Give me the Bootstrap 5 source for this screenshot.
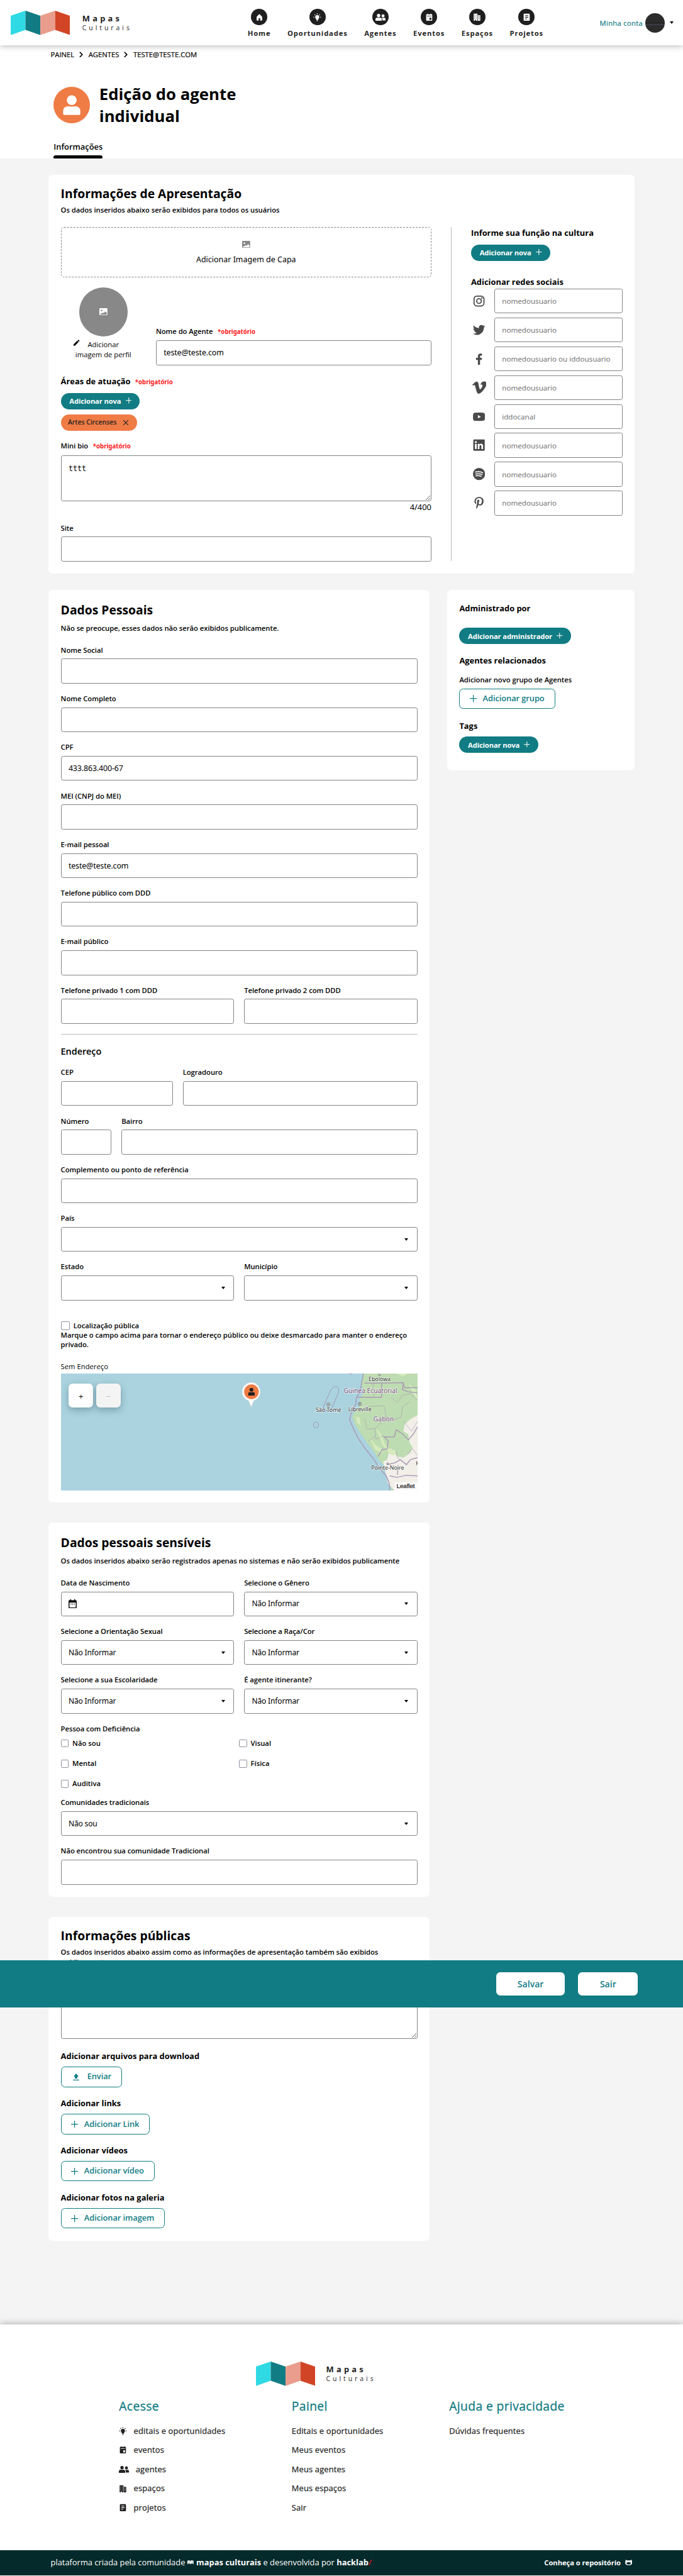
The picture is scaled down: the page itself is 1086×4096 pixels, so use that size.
<!DOCTYPE html>
<html lang="pt-BR">
<head>
<meta charset="utf-8">
<meta name="viewport" content="width=device-width, initial-scale=1">
<title>Edição do agente individual - Mapas Culturais</title>
<link rel="stylesheet" href="https://cdn.jsdelivr.net/npm/bootstrap@5.3.0/dist/css/bootstrap.min.css">
<style>
:root{--teal:#117c83;--orange:#ef7b45;--ink:#1f1f1f}
html{background:#f4f4f4;font-size:8.053px}
body{font-family:"Open Sans",sans-serif;font-size:1.4rem;line-height:1.9rem;color:#000;background:#f4f4f4;position:relative}
svg{display:block;flex:none}
a{color:inherit;text-decoration:none}
.i12{width:1.2rem;height:1.2rem}
.i14{width:1.4rem;height:1.4rem}
.i16{width:1.6rem;height:1.6rem}
.ipeople{width:2rem;height:1.4rem}
.ipic{width:1.6rem;height:1.4rem}
.ilogo{width:11.7rem;height:4.8rem}
.ichev{width:.8rem;height:1.2rem}
.topbar{height:9rem;background:#fff;box-shadow:0 .2rem 1.2rem rgba(0,0,0,.27);position:relative;padding:0 1.9rem 0 2.05rem;display:grid;grid-template-columns:46.85rem 1fr auto}
.brand-name{font-weight:700;font-size:1.6rem;line-height:2rem;letter-spacing:.52rem;color:var(--ink)}
.brand-sub{font-size:1.3rem;line-height:1.8rem;letter-spacing:.49rem;color:var(--ink)}
.brand-txt{margin-left:2.5rem}
.topnav{gap:3.3rem;padding-top:1.8rem}
.topnav a{font-weight:700;letter-spacing:.105rem;color:var(--ink);line-height:1.9rem}
.ring{width:3.2rem;height:3.2rem;border-radius:50%;background:var(--ink);color:#fff;margin-bottom:.6rem;display:flex;align-items:center;justify-content:center}
.account{color:var(--teal);letter-spacing:.035rem;-webkit-text-stroke:.2px}
.avatar{width:3.8rem;height:3.8rem;margin-left:.5rem;border-radius:50%;background:linear-gradient(#2c2c2c 0 22%,#3a2e30 22% 24%,#2b2b2b 24% 50%,#1f1f1f 50% 53%,#2d3036 53% 57%,#42454a 57% 60%,#2c2c2c 60%)}
.caret-mini{border:.4rem solid transparent;border-top:.5rem solid #000;border-bottom:0;margin-left:1rem}
.headblock{background:#fff;height:22.3rem;padding:.8rem 0 0 10rem}
.crumbs{font-weight:500;gap:1rem;-webkit-text-stroke:.2px}
.title-row{margin:5.5rem 0 0 .6rem;gap:1.8rem}
.title-row h1{font-size:3.2rem;line-height:4.4rem;font-weight:700;margin:-.8rem 0 0;width:32rem}
.who{width:7.2rem;height:7.2rem;border-radius:50%;background:var(--orange)}
.who svg{width:3.5rem;height:4.1rem}
.tab-on{width:fit-content;margin:2.7rem 0 0 .6rem;font-size:1.6rem;line-height:2.2rem;font-weight:600}
.tab-on::after{content:"";display:block;height:.6rem;background:#000;border-radius:.4rem .4rem .2rem .2rem;margin-top:.6rem}
.wrap{width:115.7rem;margin:3.2rem 0 0 9.6rem}
.main-col{width:75.2rem}
.panel{background:#fff;border-radius:.8rem;padding:2.4rem}
.panel+.panel{margin-top:4rem}
.side-panel{width:37rem;height:35.6rem}
.panel h2{font-size:2.4rem;line-height:3.3rem;font-weight:700;margin:0 0 .9rem}
.panel.tight{padding-top:2.1rem}
.panel.tight h2{margin-bottom:.6rem}
.panel h4{font-size:1.6rem;line-height:2.2rem;font-weight:700;margin:0}
.hint{font-weight:600;font-size:1.4rem;margin:0;letter-spacing:-.004rem}
.form-label{font-weight:600;margin:0 0 .8rem;line-height:1.9rem;display:block;font-size:1.4rem;letter-spacing:-.005rem}
.req{font-size:1.2rem;line-height:1.2rem;font-weight:700;color:#f22;margin-left:.6rem;font-family:"Noto Sans",sans-serif;letter-spacing:0}
.form-control,.form-select{height:4.9rem;border:1px solid #848484;border-radius:.4rem;font:1.55rem/2.2rem "Noto Sans",sans-serif;letter-spacing:-.02rem;color:#000;padding:0 1.4rem;background-color:#fff}
.form-control::placeholder{color:#777;font-size:1.45rem;letter-spacing:-.005rem}
.form-select{background-image:url("data:image/svg+xml,%3Csvg xmlns='http://www.w3.org/2000/svg' viewBox='0 0 8 5'%3E%3Cpath d='M0 0h8L4 5z'/%3E%3C/svg%3E");background-size:.8rem .5rem;background-position:right 1.6rem center;font-size:1.5rem}
textarea.bio{height:9.1rem;padding-top:1.5rem;font-family:"DejaVu Sans Mono",monospace;font-size:1.45rem;line-height:2rem;letter-spacing:0}
.counter{font:1.6rem/2.2rem "Noto Sans",sans-serif;margin:.1rem 0 2rem}
.fields{display:flex;flex-direction:column;gap:2rem}
.hint+.fields{margin-top:2.4rem}
.pair{display:grid;grid-template-columns:1fr 1fr;gap:2rem}
.cep{grid-template-columns:22.1rem 1fr}
.num{grid-template-columns:10rem 1fr}
.cover{height:10rem;border:1px dashed #888;border-radius:.6rem;font-size:1.55rem;line-height:2.2rem;padding-top:2.6rem;font-family:"Noto Sans",sans-serif}
.cover svg{color:#888;margin-bottom:1.2rem}
.profile-row{height:15.3rem;margin:2rem 0 2.2rem}
.photo-col{width:16.8rem;margin-right:2rem}
.photo{width:9.6rem;height:9.6rem;border-radius:50%;background:#888;color:#fff;margin-bottom:.7rem}
.pencil{left:-.3rem;top:0}
.pill{display:flex;width:fit-content;align-items:center;height:3.2rem;border-radius:1.6rem;background:var(--teal);color:#fff;font-weight:700;font-size:1.4rem;letter-spacing:-.02rem;padding:0 1.6rem 0 1.7rem;gap:.9rem}
.pill svg{margin-top:-.2rem}
.tag-or{background:var(--orange);color:var(--ink);height:3.3rem;font-size:1.3rem;font-weight:600;gap:1.3rem;padding:0 1.7rem 0 1.4rem;letter-spacing:0}
.tag-or svg{margin:0;width:1rem;height:1rem}
.tags-col{gap:1rem;margin:1.1rem 0 2rem}
.btn-line{display:flex;align-items:center;height:4rem;border:.2rem solid var(--teal);border-radius:.8rem;color:var(--teal);font:600 1.6rem/2.2rem "Open Sans",sans-serif;letter-spacing:-.01rem;background:#fff;padding:0 2rem 0 1.9rem;gap:1.2rem}
.upl{margin:.9rem 0 2.2rem}
.divider-v{width:1px;height:66rem;background:#bbb;margin:0 3.9rem 0 3.8rem}
.rule-h{height:1px;background:#bbb;margin:2rem 0 2.1rem}
.sub-h{font-size:1.8rem;line-height:2.4rem;font-weight:600;margin-bottom:2rem;letter-spacing:-.01rem}
.social{display:flex;align-items:center;color:#4a4a4a;margin-bottom:.8rem}
.social svg{width:2.4rem;height:2.4rem;margin:0 1.8rem 0 .4rem}
.social svg.vim{width:2.8rem;height:2.8rem;margin:0 1.6rem 0 .2rem}
.social .form-control{width:25.3rem}
.box{width:1.8rem;height:1.8rem;border:.2rem solid #8f8f9d;border-radius:.2rem;background:#fff;flex:none;display:inline-block;margin:.1rem .7rem 0 0}
.box.sm16{width:1.6rem;height:1.6rem;margin-top:.2rem}
.checks{display:grid;grid-template-columns:35.2rem 1fr;row-gap:2.1rem;font-weight:600;margin:1rem 0 1.8rem}
.map{height:23rem;position:relative;background:#aad3df;overflow:hidden}
.map>svg{width:100%;height:100%}
.zbtn{position:absolute;top:1.9rem;left:1.6rem;width:4.8rem;height:4.8rem;border-radius:.8rem;background:#fff;box-shadow:0 .5rem 1.4rem rgba(30,60,80,.35);text-align:center;line-height:5rem;font-size:1.6rem}
.zbtn.off{left:7rem;background:#f4f4f4;color:#bbb}
.leaf{position:absolute;right:0;bottom:0;background:rgba(255,255,255,.75);font:1.2rem/1.6rem "Liberation Sans",sans-serif;padding:0 .5rem;color:#222;-webkit-text-stroke:.25px}
.actionbar{position:absolute;left:0;right:0;top:387rem;height:9.4rem;background:var(--teal);padding:0 8.9rem;display:flex;justify-content:flex-end;align-items:center;gap:2.6rem;z-index:5}
.actionbar button{height:4.6rem;width:13.6rem;border:0;border-radius:.8rem;background:#fff;color:var(--teal);font:600 1.75rem/2.4rem "Open Sans",sans-serif}
.actionbar button:last-child{width:11.8rem}
.foot{margin-top:16.6rem;background:#fff;height:44.5rem;box-shadow:0 -.2rem 1.2rem rgba(0,0,0,.27);padding-top:7.3rem;color:var(--ink)}
.foot-logo{margin-left:50.5rem}
.foot-logo .brand-txt{margin-left:2.2rem}
.foot-cols{padding:2.4rem 0 0 23.5rem;display:grid;grid-template-columns:34.1rem 31.1rem 1fr}
.foot h5{font-size:2.4rem;line-height:3.3rem;font-weight:500;color:var(--teal);margin:0 0 2.1rem;letter-spacing:.045rem;-webkit-text-stroke:.3px}
.foot a{display:flex;align-items:center;height:2.2rem;margin-bottom:1.6rem;font-size:1.6rem;font-weight:500;letter-spacing:.02rem;-webkit-text-stroke:.25px}
.foot a svg{margin-right:1.3rem}
.base{background:#052a2b;height:5rem;color:#fff;padding:0 10rem;display:flex;justify-content:space-between;align-items:center;font-size:1.6rem}
.base .mk{width:1.2rem;height:.8rem;margin:0 .5rem}
.repo{font-size:1.4rem;font-weight:700;letter-spacing:-.01rem}
.repo svg{width:1.4rem;height:1.1rem;margin-left:.9rem}
</style>
</head>
<body>
<svg width="0" height="0" class="position-absolute">
<symbol id="logo" viewBox="0 0 117 48"><path fill="#2fdae4" d="M0 10 29.2 0v38L0 48z"/><path fill="#117c83" d="m29.2 0 29.3 10v38L29.2 38z"/><path fill="#ea9d8d" d="M58.5 10 87.8 0v38L58.5 48z"/><path fill="#d14526" d="M87.8 0 117 10v38L87.8 38z"/></symbol>
<symbol id="home" viewBox="0 0 16 16"><path fill="currentColor" d="M8 1.5 13.5 7v6.5a1 1 0 0 1-1 1H9.6v-4.6H6.5v4.6h-3a1 1 0 0 1-1-1V7z"/></symbol>
<symbol id="bulb" viewBox="0 0 16 16"><path fill="currentColor" d="M8 3.800a4 4 0 0 1 4 4c0 2-1.600 2.900-1.900 4.800H5.900C5.600 10.700 4 9.800 4 7.800a4 4 0 0 1 4-4zM6.300 13.200h3.400l-.5 1.200H6.800zM7.300.4h1.400v2H7.300zM.4 7h2.200v1.400H.4zM13.400 7h2.200v1.400h-2.200zM2.300 3l1-1 1.300 1.300-1 1zM11.400 3.300 12.700 2l1 1-1.300 1.300zM7 14.900h2v.8H7z"/></symbol>
<symbol id="people" viewBox="0 0 20 14"><g fill="currentColor"><circle cx="6.200" cy="3.400" r="3.300"/><circle cx="15" cy="3.900" r="2.900"/><path d="M0 12.500V11c0-2.300 1.500-3.500 3.500-3.500 1 0 1.700.4 2.700.4s1.700-.4 2.700-.4c2 0 3.500 1.200 3.500 3.500v1.500c0 .9-.5 1.500-1.400 1.500H1.400C.5 14 0 13.400 0 12.500zM12.500 8c.8-.4 1.600 0 2.500 0s1.500-.3 2.300-.3c1.600 0 2.700 1.200 2.700 3v1.100c0 .8-.5 1.300-1.200 1.300h-5.300c.3-2 .2-3.700-1-5.100z"/></g></symbol>
<symbol id="event" viewBox="0 0 16 16"><path fill="currentColor" fill-rule="evenodd" d="M4 1h1.500v1.200h5V1H12v1.200h.6c.8 0 1.400.6 1.400 1.400v10c0 .8-.6 1.400-1.400 1.400H3.400c-.8 0-1.400-.6-1.400-1.400v-10c0-.8.6-1.400 1.400-1.400H4zM3.500 5v1h9V5zM8.500 9v4h3.800V9z"/></symbol>
<symbol id="build" viewBox="0 0 16 16"><path fill="currentColor" fill-rule="evenodd" d="M1.500 1h7.500v14H6.300v-2H4.200v2H1.500zM9.800 4H14.500v11H9.800zM3 3v1h1.200V3zM6 3v1h1.200V3zM3 5.500v1h1.200v-1zM6 5.500v1h1.200v-1zM3 8v1h1.200V8zM6 8v1h1.200V8zM3 10.500v1h1.200v-1zM6 10.500v1h1.200v-1zM11.500 6v1h1.300V6zM11.500 8.500v1h1.300v-1zM11.500 11v1h1.300v-1z"/></symbol>
<symbol id="doc" viewBox="0 0 16 16"><path fill="currentColor" fill-rule="evenodd" d="M3.400 1h9.200c.8 0 1.400.6 1.400 1.400v11.200c0 .8-.6 1.400-1.400 1.400H3.400c-.8 0-1.400-.6-1.400-1.400V2.400C2 1.600 2.600 1 3.400 1zM4.800 4v1.300h6.400V4zM4.800 7.300v1.300h6.400V7.300zM4.800 10.600v1.300h4v-1.300z"/></symbol>
<symbol id="user" viewBox="0 0 36 42"><g fill="currentColor"><circle cx="18" cy="10.500" r="10"/><path d="M.5 38v-5.500c0-6 4.500-9.700 10-9.700 2.500 0 4.500.9 7.500.9s5-.9 7.500-.9c5.500 0 10 3.700 10 9.700V38c0 1.600-1 2.500-2.500 2.500H3C1.500 40.500.5 39.600.5 38z"/></g></symbol>
<symbol id="pic" viewBox="0 0 16 14"><path fill="currentColor" fill-rule="evenodd" d="M1.500 0h13A1.500 1.500 0 0 1 16 1.500v11a1.500 1.500 0 0 1-1.500 1.500h-13A1.500 1.500 0 0 1 0 12.500v-11A1.500 1.500 0 0 1 1.500 0zM4.500 3a1.600 1.600 0 1 0 0 3.200 1.600 1.600 0 0 0 0-3.200zM1.800 12.600h12.700V9l-3-2.600-2.700 3.400-1.600-1-3.400 1.800-2 .6z"/></symbol>
<symbol id="plus" viewBox="0 0 12 12"><path stroke="currentColor" stroke-width="1.300" d="M6 0v12M0 6h12"/></symbol>
<symbol id="chev" viewBox="0 0 8 12"><path fill="none" stroke="#000" stroke-width="2" d="m1 1 5 5-5 5"/></symbol>
</svg>

<header class="topbar">
  <div class="d-flex align-items-center"><svg class="ilogo"><use href="#logo"/></svg><div class="brand-txt"><div class="brand-name">Mapas</div><div class="brand-sub">Culturais</div></div></div>
  <nav class="topnav d-flex align-items-start">
    <a class="d-flex flex-column align-items-center" href="#"><span class="ring"><svg class="i16"><use href="#home"/></svg></span>Home</a>
    <a class="d-flex flex-column align-items-center" href="#"><span class="ring"><svg class="i16"><use href="#bulb"/></svg></span>Oportunidades</a>
    <a class="d-flex flex-column align-items-center" href="#"><span class="ring"><svg class="ipeople"><use href="#people"/></svg></span>Agentes</a>
    <a class="d-flex flex-column align-items-center" href="#"><span class="ring"><svg class="i16"><use href="#event"/></svg></span>Eventos</a>
    <a class="d-flex flex-column align-items-center" href="#"><span class="ring"><svg class="i16"><use href="#build"/></svg></span>Espaços</a>
    <a class="d-flex flex-column align-items-center" href="#"><span class="ring"><svg class="i16"><use href="#doc"/></svg></span>Projetos</a>
  </nav>
  <div class="d-flex align-items-center"><span class="account">Minha conta</span><span class="avatar"></span><span class="caret-mini"></span></div>
</header>

<section class="headblock">
  <div class="crumbs d-flex align-items-center"><span>PAINEL</span><svg class="ichev"><use href="#chev"/></svg><span>AGENTES</span><svg class="ichev"><use href="#chev"/></svg><span>TESTE@TESTE.COM</span></div>
  <div class="title-row d-flex align-items-start"><div class="who d-flex align-items-center justify-content-center text-white"><svg><use href="#user"/></svg></div><h1>Edição do agente individual</h1></div>
  <div class="tab-on">Informações</div>
</section>

<main class="wrap">
  <section class="panel tight">
    <h2>Informações de Apresentação</h2>
    <p class="hint">Os dados inseridos abaixo serão exibidos para todos os usuários</p>
    <div class="d-flex" style="margin-top:2.4rem">
      <div style="width:73.2rem">
        <div class="cover d-flex flex-column align-items-center"><svg class="ipic"><use href="#pic"/></svg>Adicionar Imagem de Capa</div>
        <div class="profile-row d-flex">
          <div class="photo-col d-flex flex-column align-items-center">
            <div class="photo d-flex align-items-center justify-content-center"><svg class="ipic"><use href="#pic"/></svg></div>
            <div class="text-center position-relative">Adicionar<br>imagem de perfil<svg class="pencil i12 position-absolute" viewBox="0 0 12 12"><path d="M0 12V9.400L7.200 2.200l2.600 2.600L2.600 12zM8 1.400 9.400 0 12 2.600 10.600 4z"/></svg></div>
          </div>
          <div class="mt-auto flex-grow-1"><label class="form-label">Nome do Agente <span class="req">*obrigatório</span></label><input class="form-control" value="teste@teste.com"></div>
        </div>
        <h4>Áreas de atuação<span class="req" style="margin-left:.9rem">*obrigatório</span></h4>
        <div class="tags-col d-flex flex-column align-items-start">
          <span class="pill">Adicionar nova <svg class="i12"><use href="#plus"/></svg></span>
          <span class="pill tag-or">Artes Circenses <svg viewBox="0 0 10 10"><path stroke="#1f1f1f" stroke-width="1.300" d="m0 0 10 10M10 0 0 10"/></svg></span>
        </div>
        <label class="form-label" style="margin-bottom:.9rem">Mini bio <span class="req">*obrigatório</span></label>
        <textarea class="bio form-control d-block">tttt</textarea>
        <div class="counter text-end">4/400</div>
        <label class="form-label">Site</label><input class="form-control">
      </div>
      <div class="divider-v"></div>
      <div>
        <h4 style="margin:.2rem 0 1.1rem">Informe sua função na cultura</h4>
        <span class="pill">Adicionar nova <svg class="i12"><use href="#plus"/></svg></span>
        <h4 style="margin:3.1rem 0 .2rem">Adicionar redes sociais</h4>
        <div class="social"><svg viewBox="0 0 24 24" fill="none" stroke="currentColor" stroke-width="2.200"><rect x="2.200" y="2.200" width="19.600" height="19.600" rx="5.500"/><circle cx="12" cy="12" r="4.600"/><circle cx="17.600" cy="6.400" r=".5"/></svg><input class="form-control" placeholder="nomedousuario"></div>
        <div class="social"><svg viewBox="0 0 24 24" fill="currentColor"><path d="M23.953 4.570a10 10 0 01-2.825.775 4.958 4.958 0 002.163-2.723c-.951.555-2.005.959-3.127 1.184a4.920 4.920 0 00-8.384 4.482C7.690 8.095 4.067 6.130 1.640 3.162a4.822 4.822 0 00-.666 2.475c0 1.710.87 3.213 2.188 4.096a4.904 4.904 0 01-2.228-.616v.06a4.923 4.923 0 003.946 4.827 4.996 4.996 0 01-2.212.085 4.936 4.936 0 004.604 3.417 9.867 9.867 0 01-6.102 2.105c-.39 0-.779-.023-1.170-.067a13.995 13.995 0 007.557 2.209c9.053 0 13.998-7.496 13.998-13.985 0-.21 0-.42-.015-.63A9.935 9.935 0 0024 4.590z"/></svg><input class="form-control" placeholder="nomedousuario"></div>
        <div class="social"><svg viewBox="0 0 24 24" fill="currentColor"><path d="M14 24v-10h3.400l.6-4H14V7.500c0-1.100.6-2.200 2.300-2.200H18V1.800S16.400 1.500 15 1.500c-3.200 0-5.200 1.900-5.200 5.300V10H6v4h3.800v10z"/></svg><input class="form-control" placeholder="nomedousuario ou iddousuario"></div>
        <div class="social"><svg class="vim" viewBox="0 0 24 24" fill="currentColor"><path d="M23.977 6.416c-.105 2.338-1.739 5.543-4.894 9.609-3.268 4.247-6.026 6.370-8.290 6.370-1.409 0-2.578-1.294-3.553-3.881L5.322 11.400C4.603 8.816 3.834 7.522 3.010 7.522c-.179 0-.806.378-1.881 1.132L0 7.197a315.065 315.065 0 003.501-3.128C5.080 2.701 6.266 1.984 7.055 1.910c1.867-.18 3.016 1.100 3.447 3.838.465 2.953.789 4.789.971 5.507.539 2.450 1.131 3.674 1.776 3.674.502 0 1.256-.796 2.265-2.385 1.004-1.589 1.540-2.797 1.612-3.628.144-1.371-.395-2.061-1.614-2.061-.574 0-1.167.121-1.777.391 1.186-3.868 3.434-5.757 6.762-5.637 2.473.06 3.628 1.664 3.493 4.797z"/></svg><input class="form-control" placeholder="nomedousuario"></div>
        <div class="social"><svg viewBox="0 0 24 24" fill="currentColor"><path fill-rule="evenodd" d="M4 4q8-.6 16 0 3.500.3 3.700 4 .3 4 0 8-.2 3.700-3.700 4-8 .6-16 0-3.500-.3-3.700-4-.3-4 0-8Q.5 4.300 4 4zm5.800 4.800v6.400l6-3.200z"/></svg><input class="form-control" placeholder="iddocanal"></div>
        <div class="social"><svg viewBox="0 0 24 24" fill="currentColor"><path fill-rule="evenodd" d="M2 .8h20a1.300 1.300 0 0 1 1.300 1.300v19.800a1.300 1.300 0 0 1-1.300 1.300H2A1.300 1.300 0 0 1 .7 21.900V2.100A1.300 1.300 0 0 1 2 .8zM5.700 4a2 2 0 1 0 0 4 2 2 0 0 0 0-4zM4 9.500V20h3.400V9.500zm5.500 0V20h3.400v-5.500c0-3.400 3.700-3.300 3.700-.2V20H20v-6.500c0-4.800-5-5.300-7.100-2.500V9.500z"/></svg><input class="form-control" placeholder="nomedousuario"></div>
        <div class="social"><svg viewBox="0 0 24 24"><circle cx="12" cy="12" r="12" fill="currentColor"/><path fill="none" stroke="#fff" stroke-linecap="round" stroke-width="1.900" d="M5 8.200c5-1.400 10-.9 14.300 1.400M5.500 12c4.500-1.200 8.500-.7 12.300 1.400M6 15.700c3.700-.9 7-.6 10.300 1.300"/></svg><input class="form-control" placeholder="nomedousuario"></div>
        <div class="social mb-0"><svg viewBox="-64 0 512 512" fill="currentColor"><path d="M204 6.500C101.400 6.500 0 74.900 0 185.600 0 256 39.600 296 63.600 296c9.900 0 15.600-27.600 15.600-35.400 0-9.300-23.700-29.100-23.700-67.800 0-80.400 61.200-137.400 140.400-137.400 68.100 0 118.500 38.700 118.500 109.800 0 53.100-21.300 152.700-90.300 152.700-24.900 0-46.200-18-46.200-43.800 0-37.800 26.400-74.400 26.400-113.400 0-66.200-93.900-54.200-93.900 25.800 0 16.800 2.100 35.400 9.600 50.700-13.800 59.400-42 147.900-42 209.100 0 18.900 2.700 37.500 4.500 56.400 3.400 3.800 1.700 3.400 6.900 1.500 50.400-69 48.600-82.500 71.400-172.800 12.300 23.400 44.100 36 69.300 36 106.200 0 153.900-103.500 153.900-196.800C384 71.300 298.200 6.500 204 6.500z"/></svg><input class="form-control" placeholder="nomedousuario"></div>
      </div>
    </div>
  </section>

  <div class="d-flex align-items-start justify-content-between" style="margin-top:3.2rem">
    <div class="main-col">
      <section class="panel">
        <h2>Dados Pessoais</h2>
        <p class="hint">Não se preocupe, esses dados não serão exibidos publicamente.</p>
        <div class="fields">
          <div><label class="form-label">Nome Social</label><input class="form-control"></div>
          <div><label class="form-label">Nome Completo</label><input class="form-control"></div>
          <div><label class="form-label">CPF</label><input class="form-control" value="433.863.400-67"></div>
          <div><label class="form-label">MEI (CNPJ do MEI)</label><input class="form-control"></div>
          <div><label class="form-label">E-mail pessoal</label><input class="form-control" value="teste@teste.com"></div>
          <div><label class="form-label">Telefone público com DDD</label><input class="form-control"></div>
          <div><label class="form-label">E-mail público</label><input class="form-control"></div>
          <div class="pair"><div><label class="form-label">Telefone privado 1 com DDD</label><input class="form-control"></div><div><label class="form-label">Telefone privado 2 com DDD</label><input class="form-control"></div></div>
        </div>
        <div class="rule-h"></div>
        <div class="sub-h">Endereço</div>
        <div class="fields">
          <div class="pair cep"><div><label class="form-label">CEP</label><input class="form-control"></div><div><label class="form-label">Logradouro</label><input class="form-control"></div></div>
          <div class="pair num"><div><label class="form-label">Número</label><input class="form-control"></div><div><label class="form-label">Bairro</label><input class="form-control"></div></div>
          <div><label class="form-label">Complemento ou ponto de referência</label><input class="form-control"></div>
          <div><label class="form-label">País</label><select class="form-select"></select></div>
          <div class="pair"><div><label class="form-label">Estado</label><select class="form-select"></select></div><div><label class="form-label">Município</label><select class="form-select"></select></div></div>
        </div>
        <div class="d-flex hint" style="margin-top:4rem"><span class="box"></span>Localização pública</div>
        <p class="hint" style="margin-bottom:2.4rem">Marque o campo acima para tornar o endereço público ou deixe desmarcado para manter o endereço privado.</p>
        <div style="margin-bottom:.5rem">Sem Endereço</div>
        <div class="map">
          <svg viewBox="0 0 704 230" font-family="Noto Sans, sans-serif">
            <path fill="#bedcb1" d="M597 0l-3 22 3 18-8 8 3 14-13 14-4 10 6 16 12 18 11 16 15 20 8 14 14 14 6 16 3 14 1 12 14 24h40V0z"/>
            <path fill="#f2efe9" d="M704 82l-14 8-11 10-3 14 10 6 2 16 6 10-4 10-14 10-12-2-12-16-4 6-4 16-8 4 3 12 6 30 16 18h43z"/>
            <path fill="#d6ebbd" d="M620 106l12 14 8 20 10 10 12 2-4 10-8-2-16-20-6-18zM608 124l12 16 12 8 4 10-16-8zM582 84l8 4 2 16-8-8zM662 0l14 6 8-6zM686 20l14 12 4 20-10-14z"/>
            <g fill="none" stroke="#a99bb5" stroke-width="1.800"><path d="M597 0l-3 16-3 18-8 14-1 12-10 20-2 12 8 18 10 20 14 20 16 20 10 16 14 16 6 14 1 14 4 12 10 24"/><path d="M599 19h34l43-1 2 10h26M633 19v28h-48"/><path d="M676 18l-2 14 12 4 18 2M626 164l8-14 10-1 2-16-8-8 20 0 4-14 12 8 12 12 10-12 8-14M644 180l16-4 10-6 12 10 8-10 14-4M649 202l14 3 18-4 23 1M664 200l2-20"/></g>
            <g fill="none" stroke="#a99bb5" stroke-width=".8"><path d="M616 20l2 26M652 47l12 10 10-14 16-3 14 12M600 66l20-2 18 0 4 20 6 10 24-8 2-20 14-10M642 84l-20 24-18 2-4-20M620 110l2 20 16-8M606 134l14-10M676 94l16 20 12-20M662 152l2 14 20 14M684 160l10-12 10 14"/></g>
            <g fill="none" stroke="#9f93b8" stroke-width="1.200"><path d="M538 27q6-4 10 2 2 6-2 13l-13 30q-7 4-12 0-5-3-2-9l14-31z"/><rect x="498.500" y="96" width="10" height="11" rx="5"/><path d="M568 0q4 2 8 0"/></g>
            <g fill="#fff" stroke="#444"><circle cx="528" cy="61" r="3"/><circle cx="590" cy="60" r="3"/><circle cx="629" cy="3" r="1.600"/><circle cx="645" cy="178" r="1.600"/></g><g fill="#333"><circle cx="528" cy="61" r="1.200"/><circle cx="590" cy="60" r="1.200"/></g>
            <g font-size="11" text-anchor="middle" fill="#333" stroke="#fff" stroke-opacity=".7" stroke-width="2" paint-order="stroke"><text x="629" y="15">Ebolowa</text><text x="528" y="76">São Tomé</text><text x="590" y="74">Libreville</text><text x="645" y="190">Pointe-Noire</text><text x="704" y="181">K</text></g>
            <g font-size="12.800" text-anchor="middle" fill="#7a5280" stroke="#fff" stroke-opacity=".7" stroke-width="2" paint-order="stroke"><text x="611" y="38">Guinea Ecuatorial</text><text x="637" y="94">Gabon</text></g>
            <path fill="#fff" stroke="#ccc" stroke-width=".8" d="M376 17.500a18.500 18.500 0 0 1 5 36l-5.500 13-5.500-13a18.500 18.500 0 0 1 6-36z"/><circle cx="376" cy="36" r="14.500" fill="#ef7b45"/><svg x="369" y="28" width="14" height="16" color="#1f1f1f"><use href="#user"/></svg>
          </svg>
          <span class="zbtn">+</span><span class="zbtn off">−</span><span class="leaf">Leaflet</span>
        </div>
      </section>

      <section class="panel">
        <h2>Dados pessoais sensíveis</h2>
        <p class="hint">Os dados inseridos abaixo serão registrados apenas no sistemas e não serão exibidos publicamente</p>
        <div class="fields">
          <div class="pair"><div><label class="form-label">Data de Nascimento</label><div class="form-control d-flex align-items-center"><svg class="i16" style="height:1.8rem" viewBox="0 0 16 18"><path fill-rule="evenodd" d="M3 0h2v2h6V0h2v2h1.500A1.500 1.500 0 0 1 16 3.500v13a1.500 1.500 0 0 1-1.500 1.500h-13A1.500 1.500 0 0 1 0 16.500v-13A1.500 1.500 0 0 1 1.500 2H3zM1.800 6.500v9.700h12.400V6.500zM3.800 8.700h1.800v1.600H3.800zm3.300 0h1.800v1.600H7.100zm3.300 0h1.800v1.600h-1.800z"/></svg></div></div><div><label class="form-label">Selecione o Gênero</label><select class="form-select"><option>Não Informar</option></select></div></div>
          <div class="pair"><div><label class="form-label">Selecione a Orientação Sexual</label><select class="form-select"><option>Não Informar</option></select></div><div><label class="form-label">Selecione a Raça/Cor</label><select class="form-select"><option>Não Informar</option></select></div></div>
          <div class="pair"><div><label class="form-label">Selecione a sua Escolaridade</label><select class="form-select"><option>Não Informar</option></select></div><div><label class="form-label">É agente itinerante?</label><select class="form-select"><option>Não Informar</option></select></div></div>
        </div>
        <div class="hint" style="margin-top:2rem">Pessoa com Deficiência</div>
        <div class="checks">
          <div class="d-flex"><span class="box sm16"></span>Não sou</div><div class="d-flex"><span class="box sm16"></span>Visual</div>
          <div class="d-flex"><span class="box sm16"></span>Mental</div><div class="d-flex"><span class="box sm16"></span>Física</div>
          <div class="d-flex"><span class="box sm16"></span>Auditiva</div>
        </div>
        <div class="fields"><div><label class="form-label">Comunidades tradicionais</label><select class="form-select"><option>Não sou</option></select></div>
        <div><label class="form-label">Não encontrou sua comunidade Tradicional</label><input class="form-control"></div></div>
      </section>

      <section class="panel tight">
        <h2>Informações públicas</h2>
        <p class="hint">Os dados inseridos abaixo assim como as informações de apresentação também são exibidos<br>publicamente</p>
        <textarea class="form-control d-block" style="height:12.3rem;margin:2rem 0 2.3rem"></textarea>
        <h4>Adicionar arquivos para download</h4>
        <button class="btn-line upl" style="height:4.1rem"><svg style="width:2rem;height:1.4rem" viewBox="0 0 20 14"><path fill="currentColor" d="M10 0l5 6h-2.600v4H7.600V6H5zM4 12h12v1.700H4z"/></svg>Enviar</button>
        <h4>Adicionar links</h4>
        <button class="btn-line upl"><svg class="i14"><use href="#plus"/></svg>Adicionar Link</button>
        <h4>Adicionar vídeos</h4>
        <button class="btn-line upl"><svg class="i14"><use href="#plus"/></svg>Adicionar vídeo</button>
        <h4>Adicionar fotos na galeria</h4>
        <button class="btn-line upl mb-0"><svg class="i14"><use href="#plus"/></svg>Adicionar imagem</button>
      </section>
    </div>

    <aside class="panel side-panel d-flex flex-column align-items-start">
      <h4 style="margin:.2rem 0 2.7rem">Administrado por</h4>
      <span class="pill">Adicionar administrador <svg class="i12"><use href="#plus"/></svg></span>
      <h4 style="margin:2.2rem 0 1.7rem">Agentes relacionados</h4>
      <div class="hint">Adicionar novo grupo de Agentes</div>
      <button class="btn-line" style="margin:.8rem 0 2.3rem"><svg class="i14"><use href="#plus"/></svg>Adicionar grupo</button>
      <h4 style="margin:0 0 1rem">Tags</h4>
      <span class="pill">Adicionar nova <svg class="i12"><use href="#plus"/></svg></span>
    </aside>
  </div>
</main>

<div class="actionbar"><button>Salvar</button><button>Sair</button></div>

<footer class="foot">
  <div class="foot-logo d-flex align-items-center"><svg class="ilogo"><use href="#logo"/></svg><div class="brand-txt"><div class="brand-name">Mapas</div><div class="brand-sub">Culturais</div></div></div>
  <div class="foot-cols">
    <div><h5>Acesse</h5>
      <a href="#"><svg class="i16"><use href="#bulb"/></svg>editais e oportunidades</a>
      <a href="#"><svg class="i16"><use href="#event"/></svg>eventos</a>
      <a href="#"><svg class="ipeople"><use href="#people"/></svg>agentes</a>
      <a href="#"><svg class="i16"><use href="#build"/></svg>espaços</a>
      <a href="#"><svg class="i16"><use href="#doc"/></svg>projetos</a></div>
    <div><h5>Painel</h5><a href="#">Editais e oportunidades</a><a href="#">Meus eventos</a><a href="#">Meus agentes</a><a href="#">Meus espaços</a><a href="#">Sair</a></div>
    <div><h5>Ajuda e privacidade</h5><a href="#">Dúvidas frequentes</a></div>
  </div>
</footer>
<div class="base"><div class="d-flex align-items-center"><span>plataforma criada pela comunidade</span><svg class="mk" viewBox="0 0 12 8"><path fill="#fff" d="M0 1 2.800 0v6L0 8zM3.200 0 5.800 1v7L3.200 6zM6.200 1 8.800 0v6L6.200 8zM9.200 0 12 1v7L9.200 6z"/></svg><span><b>mapas culturais</b> e desenvolvida por <b>hacklab</b><span style="color:#f11">/</span></span></div>
<div class="repo d-flex align-items-center">Conheça o repositório<svg viewBox="0 0 14 11"><path fill="#fff" fill-rule="evenodd" d="M1 0l3 1.400h6L13 0l.4 3.500Q14.500 5 13.500 8q-1 3-6.500 3T.5 8q-1-3 .1-4.500zM3 5.500Q1.800 9.500 7 9.500t4-4q-4-1-8 0z"/></svg></div></div>
<script src="https://cdn.jsdelivr.net/npm/bootstrap@5.3.0/dist/js/bootstrap.bundle.min.js"></script>
</body>
</html>
